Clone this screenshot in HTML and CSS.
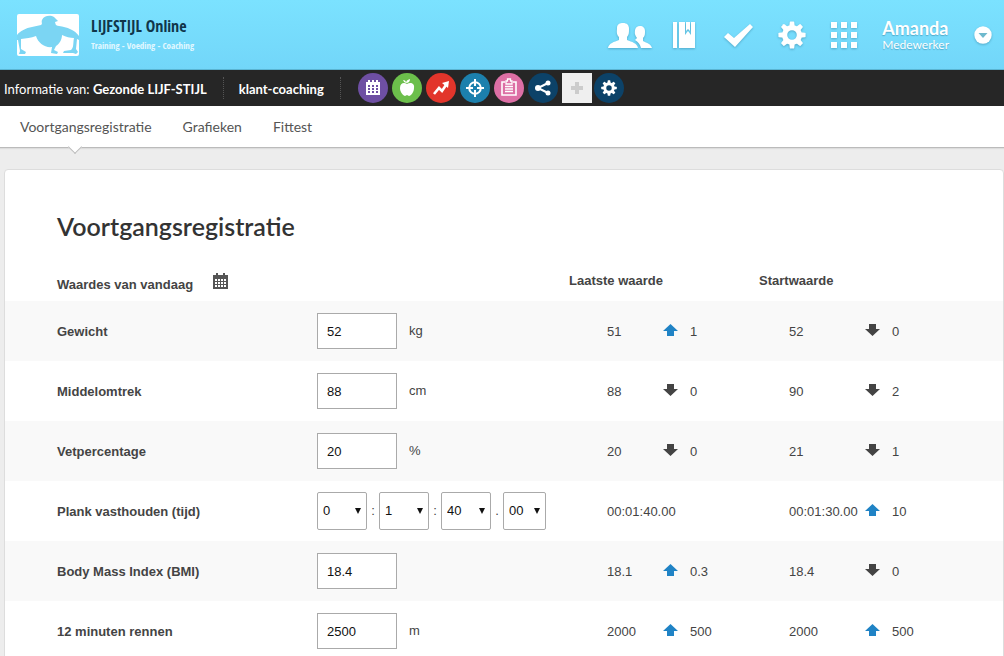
FILE: index.html
```html
<!DOCTYPE html>
<html lang="nl">
<head>
<meta charset="utf-8">
<meta name="viewport" content="width=device-width, initial-scale=1">
<title>Voortgangsregistratie - LIJFSTIJL Online</title>
<link rel="stylesheet" href="styles.css">
</head>
<body>
<svg class="defs" aria-hidden="true">
  <symbol id="gear" viewBox="0 0 28 28">
    <circle cx="14" cy="14" r="7.4" fill="none" stroke="currentColor" stroke-width="5.2"/>
    <g fill="currentColor">
      <path id="tooth" d="M11.2 6L11.8 1Q11.9 .4 12.5 .4H15.5Q16.1 .4 16.2 1L16.8 6Z"/>
      <use href="#tooth" transform="rotate(45 14 14)"/><use href="#tooth" transform="rotate(90 14 14)"/>
      <use href="#tooth" transform="rotate(135 14 14)"/><use href="#tooth" transform="rotate(180 14 14)"/>
      <use href="#tooth" transform="rotate(225 14 14)"/><use href="#tooth" transform="rotate(270 14 14)"/>
      <use href="#tooth" transform="rotate(315 14 14)"/>
    </g>
  </symbol>
  <symbol id="up" viewBox="0 0 15 12"><path fill="currentColor" d="M7.5 0L15 7H11V12H4V7H0Z"/></symbol>
  <symbol id="down" viewBox="0 0 15 12"><path fill="currentColor" d="M4 0H11V5H15L7.5 12L0 5H4Z"/></symbol>
</svg>

<header class="top">
  <a class="brand" href="#">
    <svg class="brand-mark" viewBox="0 0 62 42" aria-hidden="true">
      <rect width="62" height="42" rx="2" fill="#fff"/>
      <path fill="#7bd5f3" d="M0 21C3 17 9 14 15 13L24 11C26 10 24 8 25 6C27 1 34 1 37 3L41 7L38 8C39 11 38 11 42 12C50 13 58 16 62 22V26L60 25L59 35L61 38L59 40L56 39H46L47 37L54 36C57 34 56 28 57 24C53 24 49 23 45 21C45 26 42 30 39 32L37 36L41 38L40 40L34 39L35 33C28 34 21 29 19 22C14 24 9 24 4 25L4 35L9 38L8 40H2L3 37L1 26H0Z"/>
    </svg>
    <span class="brand-text"><span class="brand-name">LIJFSTIJL Online</span><span class="brand-tag">Training - Voeding - Coaching</span></span>
  </a>
  <nav class="tools" aria-label="Hoofdmenu">
    <a href="#" aria-label="Klanten"><svg width="44" height="27" viewBox="0 0 44 27"><path fill="currentColor" d="M0 26C1 21 6 20 11 18V15C8 12 9 9 9 6C9 2 12 1 15 1C19 1 21 3 21 7C21 10 21 13 19 15V18C24 20 29 21 30 26Z"/><path fill="currentColor" d="M27 18L29 16C26 12 27 10 27 8C28 5 29 4 32 4C35 4 37 6 37 9C37 12 37 14 35 16V19C39 21 43 22 44 26H33C32 22 30 20 27 18Z"/></svg></a>
    <a href="#" aria-label="Logboek"><svg width="22" height="26" viewBox="0 0 22 26"><path fill="currentColor" d="M0 0H4V26H0ZM6 0H12V13L15 9L18 13V0H22V26H6ZM13 0H17V9L15 7L13 9Z" fill-rule="nonzero"/></svg></a>
    <a href="#" aria-label="Taken"><svg width="29" height="24" viewBox="0 0 29 24"><path fill="currentColor" d="M0 14L4 10L10 15L26 1L29 4L11 24Z"/></svg></a>
    <a href="#" aria-label="Instellingen"><svg width="28" height="28"><use href="#gear"/></svg></a>
    <a href="#" aria-label="Apps"><svg width="26" height="26" viewBox="0 0 26 26"><path fill="currentColor" d="M0 0h6v6H0zM10 0h6v6h-6zM20 0h6v6h-6zM0 10h6v6H0zM10 10h6v6h-6zM20 10h6v6h-6zM0 20h6v6H0zM10 20h6v6h-6zM20 20h6v6h-6z"/></svg></a>
    <div class="user"><strong>Amanda</strong><span>Medewerker</span></div>
    <button class="more" type="button" aria-label="Accountmenu"><svg width="18" height="18" viewBox="0 0 18 18"><circle cx="9" cy="9" r="8.7" fill="currentColor"/><path fill="#6fb9cd" d="M4.5 7H13.5L9 12Z"/></svg></button>
  </nav>
</header>

<div class="context">
  <div class="context-item">Informatie van: <strong>Gezonde LIJF-STIJL</strong></div>
  <div class="context-item"><strong>klant-coaching</strong></div>
  <nav class="badges" aria-label="Modules">
    <a class="badge purple" href="#" aria-label="Agenda"><svg viewBox="0 0 30 30"><path fill="currentColor" fill-rule="evenodd" d="M8 9H10V7H12V9H14V7H16V9H18V7H20V9H22V22H8ZM10 12V14H12V12ZM14 12V14H16V12ZM18 12V14H20V12ZM10 15V17H12V15ZM14 15V17H16V15ZM18 15V17H20V15ZM10 18V20H12V18ZM14 18V20H16V18ZM18 18V20H20V18Z"/></svg></a>
    <a class="badge green" href="#" aria-label="Voeding"><svg viewBox="0 0 30 30"><path fill="currentColor" d="M15 11C18 9 23 10 22 15C22 19 19 23 17 23L15 22L13 23C10 22 8 18 8 15C8 10 12 9 15 11ZM14 10Q14 7 18 6Q18 10 14 10ZM11 7Q14 7 14 10Q12 10 11 7Z"/></svg></a>
    <a class="badge red" href="#" aria-label="Voortgang"><svg viewBox="0 0 30 30"><path fill="none" stroke="currentColor" stroke-width="2.6" d="M8 21L13 15L16 18L20 12"/><path fill="currentColor" d="M16 10L23 8L22 15Z"/></svg></a>
    <a class="badge blue" href="#" aria-label="Doelen"><svg viewBox="0 0 30 30"><g fill="none" stroke="currentColor" stroke-width="2"><circle cx="15" cy="15" r="5.8"/><path d="M15 6V13M15 17V24M6 15H13M17 15H24"/></g></svg></a>
    <a class="badge pink" href="#" aria-label="Vragenlijst"><svg viewBox="0 0 30 30"><g fill="none" stroke="currentColor"><path stroke-width="1.6" d="M11 9H8V22H22V9H19"/><path stroke-width="1.3" d="M12 11V8H13.5V6H16.5V8H18V11ZM11 13.5H19M11 16H19M11 18.5H19"/></g></svg></a>
    <a class="badge navy" href="#" aria-label="Delen"><svg viewBox="0 0 30 30"><path fill="none" stroke="currentColor" stroke-width="2" d="M20 10L10 15L20 20"/><g fill="currentColor"><circle cx="20" cy="10" r="2.5"/><circle cx="10" cy="15" r="3"/><circle cx="20" cy="20" r="2.5"/></g></svg></a>
    <a class="badge plain" href="#" aria-label="Toevoegen"><svg viewBox="0 0 30 30"><path fill="currentColor" d="M13 9H17V13H21V17H17V21H13V17H9V13H13Z"/></svg></a>
    <a class="badge navy last-badge" href="#" aria-label="Beheer"><svg class="small-gear"><use href="#gear"/></svg></a>
  </nav>
</div>

<nav class="tabs" aria-label="Onderdelen">
  <a class="current" href="#" aria-current="page">Voortgangsregistratie</a>
  <a href="#">Grafieken</a>
  <a href="#">Fittest</a>
</nav>

<main class="card">
  <h1>Voortgangsregistratie</h1>
  <table class="values">
    <colgroup><col class="c-label"><col class="c-input"><col class="c-last"><col class="c-diff"><col class="c-start"><col></colgroup>
    <thead>
      <tr>
        <th colspan="2" scope="col"><span class="today">Waardes van vandaag <button class="date" type="button" aria-label="Kies datum"><svg width="15" height="16" viewBox="0 0 15 16"><path fill="#555" fill-rule="evenodd" d="M0 2H3V0H5V2H10V0H12V2H15V16H0ZM2 6V8H4V6ZM5 6V8H7V6ZM8 6V8H10V6ZM11 6V8H13V6ZM2 9V11H4V9ZM5 9V11H7V9ZM8 9V11H10V9ZM11 9V11H13V9ZM2 12V14H4V12ZM5 12V14H7V12ZM8 12V14H10V12ZM11 12V14H13V12Z"/></svg></button></span></th>
        <th colspan="2" scope="col">Laatste waarde</th>
        <th colspan="2" scope="col">Startwaarde</th>
      </tr>
    </thead>
    <tbody>
      <tr>
        <th scope="row"><label for="gewicht">Gewicht</label></th>
        <td><span class="field"><input id="gewicht" type="text" value="52">kg</span></td>
        <td class="last">51</td><td><span class="diff"><svg class="up"><use href="#up"/></svg>1</span></td>
        <td class="start">52</td><td><span class="diff"><svg><use href="#down"/></svg>0</span></td>
      </tr>
      <tr>
        <th scope="row"><label for="middel">Middelomtrek</label></th>
        <td><span class="field"><input id="middel" type="text" value="88">cm</span></td>
        <td class="last">88</td><td><span class="diff"><svg><use href="#down"/></svg>0</span></td>
        <td class="start">90</td><td><span class="diff"><svg><use href="#down"/></svg>2</span></td>
      </tr>
      <tr>
        <th scope="row"><label for="vet">Vetpercentage</label></th>
        <td><span class="field"><input id="vet" type="text" value="20">%</span></td>
        <td class="last">20</td><td><span class="diff"><svg><use href="#down"/></svg>0</span></td>
        <td class="start">21</td><td><span class="diff"><svg><use href="#down"/></svg>1</span></td>
      </tr>
      <tr>
        <th scope="row"><label for="uren">Plank vasthouden (tijd)</label></th>
        <td><span class="time"><span class="pick"><select id="uren"><option>0</option></select></span><i>:</i><span class="pick"><select aria-label="Minuten"><option>1</option></select></span><i>:</i><span class="pick"><select aria-label="Seconden"><option>40</option></select></span><i>.</i><span class="pick short"><select aria-label="Honderdsten"><option>00</option></select></span></span></td>
        <td class="last">00:01:40.00</td><td></td>
        <td class="start">00:01:30.00</td><td><span class="diff"><svg class="up"><use href="#up"/></svg>10</span></td>
      </tr>
      <tr>
        <th scope="row"><label for="bmi">Body Mass Index (BMI)</label></th>
        <td><span class="field"><input id="bmi" type="text" value="18.4"></span></td>
        <td class="last">18.1</td><td><span class="diff"><svg class="up"><use href="#up"/></svg>0.3</span></td>
        <td class="start">18.4</td><td><span class="diff"><svg><use href="#down"/></svg>0</span></td>
      </tr>
      <tr>
        <th scope="row"><label for="rennen">12 minuten rennen</label></th>
        <td><span class="field"><input id="rennen" type="text" value="2500">m</span></td>
        <td class="last">2000</td><td><span class="diff"><svg class="up"><use href="#up"/></svg>500</span></td>
        <td class="start">2000</td><td><span class="diff"><svg class="up"><use href="#up"/></svg>500</span></td>
      </tr>
    </tbody>
  </table>
</main>
</body>
</html>
```
FILE: styles.css
```css
* { box-sizing: border-box; }

body {
  margin: 0;
  background: #ededed;
  color: #444;
  font: 13px/20px "Liberation Sans", Arial, sans-serif;
}

a { color: inherit; text-decoration: none; }
svg { display: block; }
button { padding: 0; border: 0; background: none; color: inherit; font: inherit; cursor: pointer; }
.defs { position: absolute; width: 0; height: 0; }

/* top bar */
.top {
  display: flex;
  justify-content: space-between;
  height: 70px;
  padding: 0 12px 0 17px;
  background: linear-gradient(#7be2ff, #72d6f9);
  border-bottom: 1px solid #5ab4d2;
  color: #fff;
  font-family: Lato, sans-serif;
}
.brand { display: flex; align-items: center; gap: 12px; }
.brand-mark { width: 62px; height: 42px; }
.brand-text { display: flex; flex-direction: column; white-space: nowrap; }
.brand-name,
.brand-tag { font-family: "Open Sans Condensed", "Liberation Sans Narrow", sans-serif; font-weight: 300; }
.brand-name { padding-bottom: 2px; color: #10364a; font-size: 16px; line-height: 20px; }
.brand-tag { color: #e3f8ff; font-size: 9px; line-height: 16px; }
.tools { display: flex; align-items: center; gap: 25px; padding-top: 1px; }
.tools svg { filter: drop-shadow(0 1px 1px rgba(0, 60, 90, .3)); }
.tools > a { flex: none; }
.tools > :nth-child(1) { margin-right: -4px; }
.tools > :nth-child(2) { margin-right: 4px; }
.user { display: flex; flex-direction: column; text-shadow: 0 1px 1px rgba(0, 60, 90, .3); }
.user strong { font-size: 18px; line-height: 20px; }
.user span { font-size: 12px; line-height: 14px; }

/* context bar */
.context {
  display: flex;
  align-items: center;
  min-height: 36px;
  background: #262626;
  color: #fff;
  font-family: Lato, sans-serif;
}
.context-item { padding: 2px 16px 0 15px; border-right: 1px dotted #555; white-space: nowrap; }
.context-item:first-child { padding-left: 4px; }
.badges { display: flex; gap: 4px; padding-left: 17px; }
.badge { display: grid; place-items: center; width: 30px; height: 30px; border-radius: 50%; }
.badge svg { width: 30px; height: 30px; }
.badge .small-gear { width: 16px; height: 16px; }
.last-badge { margin-left: -2px; }
.purple { background: #6e4fa3; }
.green { background: #6cbf4b; }
.red { background: #e2352b; }
.blue { background: #1c80ad; }
.pink { background: #dd6fa5; }
.navy { background: #0c4268; }
.plain { border-radius: 0; background: #efefef; color: #ccc; }

/* tabs */
.tabs {
  display: flex;
  gap: 31px;
  padding: 0 20px;
  background: #fff;
  border-bottom: 1px solid #bbb;
  box-shadow: 0 1px 1px #ddd;
  color: #555;
  font: 14px/41px Lato, sans-serif;
}
.current { position: relative; }
.current::after {
  content: "";
  position: absolute;
  left: 50px;
  bottom: -5px;
  width: 9px;
  height: 9px;
  background: #fff;
  border: solid #bbb;
  border-width: 0 1px 1px 0;
  transform: rotate(45deg);
}

/* card */
.card {
  margin: 21px 0 0 4px;
  padding-top: 41px;
  background: #fff;
  border: 1px solid #ddd;
  border-radius: 4px 4px 0 0;
}
h1 { margin: 0; padding-left: 52px; color: #333; font: 600 25px/30px Lato, sans-serif; }

.values { width: 100%; border-collapse: collapse; table-layout: fixed; }
.c-label { width: 312px; }
.c-input { width: 252px; }
.c-last { width: 94px; }
.c-diff { width: 96px; }
.c-start { width: 106px; }
.values th, .values td { padding: 0; text-align: left; white-space: nowrap; }
.values th:first-child { padding-left: 52px; }
.values thead th { height: 60px; padding-top: 20px; }
.today { display: flex; align-items: center; gap: 20px; padding-top: 8px; }
.date { padding-bottom: 8px; }
.values tbody td, .values tbody th { height: 60px; padding-top: 1px; }
.values tbody tr:nth-child(odd) { background: #f9f9f9; }
.values .last { padding-left: 38px; }
.values .start { padding-left: 30px; }

.field { display: flex; align-items: center; gap: 12px; }
.field input {
  width: 80px;
  height: 36px;
  padding: 0 9px;
  border: 1px solid #aaa;
  background: #fff;
  color: #111;
  font: inherit;
}
.time { display: flex; align-items: center; }
.time i { width: 12px; text-align: center; font-style: normal; }
.pick { position: relative; width: 50px; }
.pick.short { width: 43px; }
.pick select {
  appearance: none;
  width: 100%;
  height: 38px;
  padding: 0 5px;
  border: 1px solid #aaa;
  border-radius: 2px;
  background: #fff;
  color: #111;
  font: inherit;
}
.pick::after {
  content: "";
  position: absolute;
  top: 16px;
  right: 6px;
  border: solid transparent;
  border-width: 6px 3px 0;
  border-top-color: #111;
  pointer-events: none;
}
.values tbody td:nth-child(2) { padding-top: 0; }
.diff { display: flex; align-items: center; gap: 12px; }
.diff svg { width: 15px; height: 12px; margin-bottom: 3px; color: #444; }
.diff .up { color: #2083c5; }
```
